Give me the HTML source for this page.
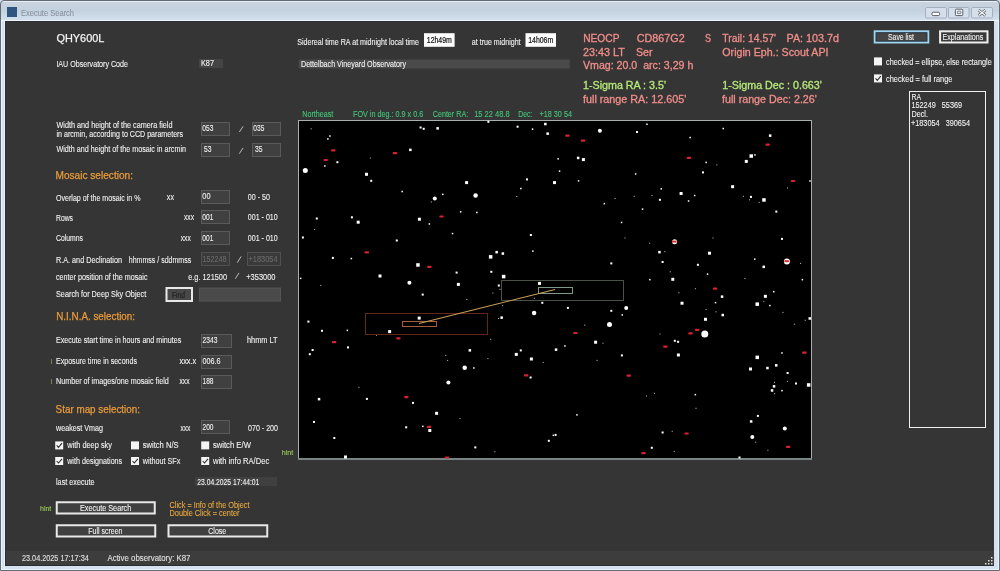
<!DOCTYPE html><html><head><meta charset="utf-8"><style>html,body{margin:0;padding:0;background:#333;overflow:hidden}svg{display:block;will-change:transform;filter:blur(0.3px)}text{font-family:"Liberation Sans",sans-serif}</style></head><body><svg width="1000" height="571" viewBox="0 0 1000 571"><rect x="0" y="0" width="1000" height="571" fill="#d4e2f0"/>
<defs><linearGradient id="tb" x1="0" y1="0" x2="0" y2="1"><stop offset="0" stop-color="#cbd3de"/><stop offset="0.45" stop-color="#c3d1df"/><stop offset="1" stop-color="#d4e0ee"/></linearGradient></defs>
<path d="M1 21 L1 4 Q1 1 4 1 L996 1 Q999 1 999 4 L999 21 Z" fill="url(#tb)"/>
<rect x="1" y="1" width="998" height="1" fill="#e8eef6"/>
<rect x="1" y="20" width="998" height="1" fill="#f0f6fc"/>
<rect x="1" y="21" width="1" height="549" fill="#e8f4ff"/>
<rect x="4" y="21" width="1" height="549" fill="#e4f0fc"/>
<rect x="998" y="21" width="1" height="549" fill="#e8f4ff"/>
<rect x="1" y="569" width="998" height="1" fill="#e8f4ff"/>
<path d="M0.5 570.5 L0.5 4 Q0.5 0.5 4 0.5 L996 0.5 Q999.5 0.5 999.5 4 L999.5 570.5 Z" fill="none" stroke="#646a74" stroke-width="1"/>
<rect x="5" y="21" width="989" height="545" fill="#2a2e32"/>
<rect x="6" y="22" width="988" height="543" fill="#353535"/>
<rect x="6" y="551" width="988" height="14" fill="#3d3d3d"/>
<rect x="991" y="557" width="1.5" height="1.5" fill="#e0e0e0"/>
<rect x="991" y="560" width="1.5" height="1.5" fill="#e0e0e0"/>
<rect x="988" y="560" width="1.5" height="1.5" fill="#e0e0e0"/>
<rect x="991" y="563" width="1.5" height="1.5" fill="#e0e0e0"/>
<rect x="988" y="563" width="1.5" height="1.5" fill="#e0e0e0"/>
<rect x="985" y="563" width="1.5" height="1.5" fill="#e0e0e0"/>
<rect x="7" y="7" width="10" height="10" fill="#2f5580"/>
<text x="21" y="16.2" font-size="8.4" fill="#8a949e" stroke="#8a949e" stroke-width="0.1" textLength="53" lengthAdjust="spacingAndGlyphs" xml:space="preserve">Execute Search</text>
<rect x="925.5" y="7.5" width="21.0" height="10.5" rx="1.2" fill="#d4dfeb" stroke="#a4b0c0" stroke-width="1"/>
<rect x="948.5" y="7.5" width="20.5" height="10.5" rx="1.2" fill="#d4dfeb" stroke="#a4b0c0" stroke-width="1"/>
<rect x="971.5" y="7.5" width="21.0" height="10.5" rx="1.2" fill="#d4dfeb" stroke="#a4b0c0" stroke-width="1"/>
<rect x="932" y="12.2" width="7.6" height="3.4" rx="1.2" fill="#fff" stroke="#454c55" stroke-width="0.9"/>
<rect x="955.4" y="9.2" width="7.4" height="6.4" rx="1" fill="#fff" stroke="#454c55" stroke-width="0.9"/>
<rect x="957.3" y="11.1" width="3.6" height="2.6" rx="0.6" fill="#dde4ec" stroke="#454c55" stroke-width="0.7"/>
<path d="M978.6 9.9 L985.4 15.4 M985.4 9.9 L978.6 15.4" stroke="#454c55" stroke-width="2.6"/><path d="M978.6 9.9 L985.4 15.4 M985.4 9.9 L978.6 15.4" stroke="#fff" stroke-width="1.3"/>
<text x="56.4" y="42" font-size="11.2" fill="#f2f2f2" stroke="#f2f2f2" stroke-width="0.25" textLength="48" lengthAdjust="spacingAndGlyphs" xml:space="preserve">QHY600L</text>
<text x="56.4" y="66.6" font-size="8.4" fill="#f2f2f2" stroke="#f2f2f2" stroke-width="0.1" textLength="71.6" lengthAdjust="spacingAndGlyphs" xml:space="preserve">IAU Observatory Code</text>
<rect x="199.5" y="59.5" width="23" height="8" fill="#444444" stroke="#444444" stroke-width="1"/>
<text x="201" y="66.4" font-size="8.4" fill="#f2f2f2" stroke="#f2f2f2" stroke-width="0.1" textLength="13" lengthAdjust="spacingAndGlyphs" xml:space="preserve">K87</text>
<text x="56.5" y="127.8" font-size="8.4" fill="#f2f2f2" stroke="#f2f2f2" stroke-width="0.1" textLength="116" lengthAdjust="spacingAndGlyphs" xml:space="preserve">Width and height of the camera field</text>
<text x="56.5" y="136.9" font-size="8.4" fill="#f2f2f2" stroke="#f2f2f2" stroke-width="0.1" textLength="126.5" lengthAdjust="spacingAndGlyphs" xml:space="preserve">in arcmin, according to CCD parameters</text>
<text x="56.5" y="152.3" font-size="8.4" fill="#f2f2f2" stroke="#f2f2f2" stroke-width="0.1" textLength="129.5" lengthAdjust="spacingAndGlyphs" xml:space="preserve">Width and height of the mosaic in arcmin</text>
<rect x="201.5" y="122.5" width="28" height="13" fill="#404040" stroke="#5a5a5a" stroke-width="1"/>
<text x="202.3" y="131" font-size="8.4" fill="#f2f2f2" stroke="#f2f2f2" stroke-width="0.1" textLength="11" lengthAdjust="spacingAndGlyphs" xml:space="preserve">053</text>
<line x1="239.3" y1="132.1" x2="243.1" y2="126.3" stroke="#c8c8c8" stroke-width="0.9"/>
<rect x="252.5" y="122.5" width="28" height="13" fill="#404040" stroke="#5a5a5a" stroke-width="1"/>
<text x="253.3" y="131" font-size="8.4" fill="#f2f2f2" stroke="#f2f2f2" stroke-width="0.1" textLength="11" lengthAdjust="spacingAndGlyphs" xml:space="preserve">035</text>
<rect x="201.5" y="143.5" width="28" height="13" fill="#404040" stroke="#5a5a5a" stroke-width="1"/>
<text x="204" y="152" font-size="8.4" fill="#f2f2f2" stroke="#f2f2f2" stroke-width="0.1" textLength="7.5" lengthAdjust="spacingAndGlyphs" xml:space="preserve">53</text>
<line x1="239.3" y1="153.7" x2="243.1" y2="147.9" stroke="#c8c8c8" stroke-width="0.9"/>
<rect x="252.5" y="143.5" width="28" height="13" fill="#404040" stroke="#5a5a5a" stroke-width="1"/>
<text x="255" y="152" font-size="8.4" fill="#f2f2f2" stroke="#f2f2f2" stroke-width="0.1" textLength="7.5" lengthAdjust="spacingAndGlyphs" xml:space="preserve">35</text>
<text x="55.5" y="178.9" font-size="11.5" fill="#eb9c3a" stroke="#eb9c3a" stroke-width="0.25" textLength="77.5" lengthAdjust="spacingAndGlyphs" xml:space="preserve">Mosaic selection:</text>
<text x="56" y="200.5" font-size="8.4" fill="#f2f2f2" stroke="#f2f2f2" stroke-width="0.1" textLength="84.5" lengthAdjust="spacingAndGlyphs" xml:space="preserve">Overlap of the mosaic in %</text>
<text x="166.8" y="200" font-size="8.4" fill="#f2f2f2" stroke="#f2f2f2" stroke-width="0.1" textLength="7.2" lengthAdjust="spacingAndGlyphs" xml:space="preserve">xx</text>
<rect x="201.5" y="190.5" width="28" height="13" fill="#404040" stroke="#5a5a5a" stroke-width="1"/>
<text x="202.3" y="199.3" font-size="8.4" fill="#f2f2f2" stroke="#f2f2f2" stroke-width="0.1" textLength="8.2" lengthAdjust="spacingAndGlyphs" xml:space="preserve">00</text>
<text x="247.8" y="200" font-size="8.4" fill="#f2f2f2" stroke="#f2f2f2" stroke-width="0.1" textLength="22.1" lengthAdjust="spacingAndGlyphs" xml:space="preserve">00 - 50</text>
<text x="56" y="220.5" font-size="8.4" fill="#f2f2f2" stroke="#f2f2f2" stroke-width="0.1" textLength="17" lengthAdjust="spacingAndGlyphs" xml:space="preserve">Rows</text>
<text x="184" y="220" font-size="8.4" fill="#f2f2f2" stroke="#f2f2f2" stroke-width="0.1" textLength="10" lengthAdjust="spacingAndGlyphs" xml:space="preserve">xxx</text>
<rect x="201.5" y="210.5" width="28" height="13" fill="#404040" stroke="#5a5a5a" stroke-width="1"/>
<text x="202.3" y="219.8" font-size="8.4" fill="#f2f2f2" stroke="#f2f2f2" stroke-width="0.1" textLength="11" lengthAdjust="spacingAndGlyphs" xml:space="preserve">001</text>
<text x="247.8" y="220.1" font-size="8.4" fill="#f2f2f2" stroke="#f2f2f2" stroke-width="0.1" textLength="29.9" lengthAdjust="spacingAndGlyphs" xml:space="preserve">001 - 010</text>
<text x="56" y="241.25" font-size="8.4" fill="#f2f2f2" stroke="#f2f2f2" stroke-width="0.1" textLength="27" lengthAdjust="spacingAndGlyphs" xml:space="preserve">Columns</text>
<text x="180.75" y="241" font-size="8.4" fill="#f2f2f2" stroke="#f2f2f2" stroke-width="0.1" textLength="10" lengthAdjust="spacingAndGlyphs" xml:space="preserve">xxx</text>
<rect x="201.5" y="231.5" width="28" height="13" fill="#404040" stroke="#5a5a5a" stroke-width="1"/>
<text x="202.3" y="240.5" font-size="8.4" fill="#f2f2f2" stroke="#f2f2f2" stroke-width="0.1" textLength="11" lengthAdjust="spacingAndGlyphs" xml:space="preserve">001</text>
<text x="247.8" y="241.1" font-size="8.4" fill="#f2f2f2" stroke="#f2f2f2" stroke-width="0.1" textLength="29.9" lengthAdjust="spacingAndGlyphs" xml:space="preserve">001 - 010</text>
<text x="56" y="263.25" font-size="8.4" fill="#f2f2f2" stroke="#f2f2f2" stroke-width="0.1" textLength="66" lengthAdjust="spacingAndGlyphs" xml:space="preserve">R.A. and Declination</text>
<text x="128.75" y="263.25" font-size="8.4" fill="#f2f2f2" stroke="#f2f2f2" stroke-width="0.1" textLength="62.5" lengthAdjust="spacingAndGlyphs" xml:space="preserve">hhmmss / sddmmss</text>
<rect x="201.5" y="252.5" width="28" height="13" fill="#3a3a3a" stroke="#505050" stroke-width="1"/>
<text x="202.5" y="261.5" font-size="8.4" fill="#6a6a6a" stroke="#6a6a6a" stroke-width="0.1" textLength="24" lengthAdjust="spacingAndGlyphs" xml:space="preserve">152248</text>
<line x1="237.3" y1="262.7" x2="241.1" y2="256.4" stroke="#c8c8c8" stroke-width="0.9"/>
<rect x="247.5" y="252.5" width="33" height="13" fill="#3a3a3a" stroke="#505050" stroke-width="1"/>
<text x="248.5" y="261.5" font-size="8.4" fill="#6a6a6a" stroke="#6a6a6a" stroke-width="0.1" textLength="29" lengthAdjust="spacingAndGlyphs" xml:space="preserve">+183054</text>
<text x="56" y="279.5" font-size="8.4" fill="#f2f2f2" stroke="#f2f2f2" stroke-width="0.1" textLength="91.5" lengthAdjust="spacingAndGlyphs" xml:space="preserve">center position of the mosaic</text>
<text x="188.25" y="279.5" font-size="8.4" fill="#f2f2f2" stroke="#f2f2f2" stroke-width="0.1" textLength="38.75" lengthAdjust="spacingAndGlyphs" xml:space="preserve">e.g. 121500</text>
<line x1="235.2" y1="278.8" x2="239" y2="272.9" stroke="#c8c8c8" stroke-width="0.9"/>
<text x="246.25" y="279.5" font-size="8.4" fill="#f2f2f2" stroke="#f2f2f2" stroke-width="0.1" textLength="29.25" lengthAdjust="spacingAndGlyphs" xml:space="preserve">+353000</text>
<text x="56" y="297" font-size="8.4" fill="#f2f2f2" stroke="#f2f2f2" stroke-width="0.1" textLength="90.25" lengthAdjust="spacingAndGlyphs" xml:space="preserve">Search for Deep Sky Object</text>
<rect x="166.5" y="288" width="25.5" height="13" fill="#484848" stroke="#e8e8e8" stroke-width="2"/>
<text x="172" y="297.8" font-size="8.4" fill="#1e1e1e" stroke="#1e1e1e" stroke-width="0.1" textLength="13" lengthAdjust="spacingAndGlyphs" xml:space="preserve">Find</text>
<rect x="199.5" y="288.0" width="81" height="13.0" fill="#4a4a4a" stroke="#555555" stroke-width="1"/>
<text x="56.25" y="319.9" font-size="11.5" fill="#eb9c3a" stroke="#eb9c3a" stroke-width="0.25" textLength="78.75" lengthAdjust="spacingAndGlyphs" xml:space="preserve">N.I.N.A. selection:</text>
<text x="56" y="343" font-size="8.4" fill="#f2f2f2" stroke="#f2f2f2" stroke-width="0.1" textLength="125.25" lengthAdjust="spacingAndGlyphs" xml:space="preserve">Execute start time in hours and minutes</text>
<rect x="201.5" y="334.5" width="30" height="13" fill="#404040" stroke="#5a5a5a" stroke-width="1"/>
<text x="202.5" y="343" font-size="8.4" fill="#f2f2f2" stroke="#f2f2f2" stroke-width="0.1" textLength="15" lengthAdjust="spacingAndGlyphs" xml:space="preserve">2343</text>
<text x="247" y="343" font-size="8.4" fill="#f2f2f2" stroke="#f2f2f2" stroke-width="0.1" textLength="30.5" lengthAdjust="spacingAndGlyphs" xml:space="preserve">hhmm LT</text>
<text x="50.6" y="364" font-size="7.2" fill="#8c9c56" stroke="#8c9c56" stroke-width="0.1" textLength="1.8" lengthAdjust="spacingAndGlyphs" xml:space="preserve">i</text>
<text x="56" y="364.25" font-size="8.4" fill="#f2f2f2" stroke="#f2f2f2" stroke-width="0.1" textLength="81" lengthAdjust="spacingAndGlyphs" xml:space="preserve">Exposure time in seconds</text>
<text x="179.5" y="364" font-size="8.4" fill="#f2f2f2" stroke="#f2f2f2" stroke-width="0.1" textLength="16.75" lengthAdjust="spacingAndGlyphs" xml:space="preserve">xxx.x</text>
<rect x="201.5" y="355.5" width="30" height="13" fill="#404040" stroke="#5a5a5a" stroke-width="1"/>
<text x="202.5" y="364" font-size="8.4" fill="#f2f2f2" stroke="#f2f2f2" stroke-width="0.1" textLength="18" lengthAdjust="spacingAndGlyphs" xml:space="preserve">006.6</text>
<text x="50.6" y="384" font-size="7.2" fill="#8c9c56" stroke="#8c9c56" stroke-width="0.1" textLength="1.8" lengthAdjust="spacingAndGlyphs" xml:space="preserve">i</text>
<text x="56" y="384.25" font-size="8.4" fill="#f2f2f2" stroke="#f2f2f2" stroke-width="0.1" textLength="112.75" lengthAdjust="spacingAndGlyphs" xml:space="preserve">Number of images/one mosaic field</text>
<text x="179.5" y="384" font-size="8.4" fill="#f2f2f2" stroke="#f2f2f2" stroke-width="0.1" textLength="10" lengthAdjust="spacingAndGlyphs" xml:space="preserve">xxx</text>
<rect x="201.5" y="375.5" width="30" height="13" fill="#404040" stroke="#5a5a5a" stroke-width="1"/>
<text x="202.5" y="384" font-size="8.4" fill="#f2f2f2" stroke="#f2f2f2" stroke-width="0.1" textLength="11" lengthAdjust="spacingAndGlyphs" xml:space="preserve">188</text>
<text x="55.6" y="413.1" font-size="11.5" fill="#eb9c3a" stroke="#eb9c3a" stroke-width="0.25" textLength="84.4" lengthAdjust="spacingAndGlyphs" xml:space="preserve">Star map selection:</text>
<text x="56" y="430.9" font-size="8.4" fill="#f2f2f2" stroke="#f2f2f2" stroke-width="0.1" textLength="47" lengthAdjust="spacingAndGlyphs" xml:space="preserve">weakest Vmag</text>
<text x="180.4" y="431" font-size="8.4" fill="#f2f2f2" stroke="#f2f2f2" stroke-width="0.1" textLength="10" lengthAdjust="spacingAndGlyphs" xml:space="preserve">xxx</text>
<rect x="201.5" y="420.5" width="28" height="13" fill="#404040" stroke="#5a5a5a" stroke-width="1"/>
<text x="202.5" y="429.5" font-size="8.4" fill="#f2f2f2" stroke="#f2f2f2" stroke-width="0.1" textLength="11" lengthAdjust="spacingAndGlyphs" xml:space="preserve">200</text>
<text x="248" y="431" font-size="8.4" fill="#f2f2f2" stroke="#f2f2f2" stroke-width="0.1" textLength="30" lengthAdjust="spacingAndGlyphs" xml:space="preserve">070 - 200</text>
<rect x="55.2" y="441.4" width="8" height="8" fill="#f4f4f4"/>
<path d="M56.7 445.4 L58.5 447.4 L62.0 443.2" fill="none" stroke="#303030" stroke-width="1.1"/>
<text x="67.2" y="448.2" font-size="8.4" fill="#f2f2f2" stroke="#f2f2f2" stroke-width="0.1" textLength="44.8" lengthAdjust="spacingAndGlyphs" xml:space="preserve">with deep sky</text>
<rect x="131" y="441.4" width="8" height="8" fill="#f4f4f4"/>
<text x="142.7" y="448.2" font-size="8.4" fill="#f2f2f2" stroke="#f2f2f2" stroke-width="0.1" textLength="36" lengthAdjust="spacingAndGlyphs" xml:space="preserve">switch N/S</text>
<rect x="201.2" y="441.4" width="8" height="8" fill="#f4f4f4"/>
<text x="212.9" y="448.2" font-size="8.4" fill="#f2f2f2" stroke="#f2f2f2" stroke-width="0.1" textLength="38" lengthAdjust="spacingAndGlyphs" xml:space="preserve">switch E/W</text>
<text x="281.8" y="454.9" font-size="7.6" fill="#9ccf5a" stroke="#9ccf5a" stroke-width="0.1" textLength="11.4" lengthAdjust="spacingAndGlyphs" xml:space="preserve">hint</text>
<rect x="55.2" y="457" width="8" height="8" fill="#f4f4f4"/>
<path d="M56.7 461 L58.5 463 L62.0 458.8" fill="none" stroke="#303030" stroke-width="1.1"/>
<text x="67.2" y="464.3" font-size="8.4" fill="#f2f2f2" stroke="#f2f2f2" stroke-width="0.1" textLength="55" lengthAdjust="spacingAndGlyphs" xml:space="preserve">with designations</text>
<rect x="131" y="457" width="8" height="8" fill="#f4f4f4"/>
<path d="M132.5 461 L134.3 463 L137.8 458.8" fill="none" stroke="#303030" stroke-width="1.1"/>
<text x="142.7" y="464.3" font-size="8.4" fill="#f2f2f2" stroke="#f2f2f2" stroke-width="0.1" textLength="37.7" lengthAdjust="spacingAndGlyphs" xml:space="preserve">without SFx</text>
<rect x="201.2" y="457" width="8" height="8" fill="#f4f4f4"/>
<path d="M202.7 461 L204.5 463 L208.0 458.8" fill="none" stroke="#303030" stroke-width="1.1"/>
<text x="212.9" y="464.3" font-size="8.4" fill="#f2f2f2" stroke="#f2f2f2" stroke-width="0.1" textLength="56.4" lengthAdjust="spacingAndGlyphs" xml:space="preserve">with info RA/Dec</text>
<text x="56" y="484.7" font-size="8.4" fill="#f2f2f2" stroke="#f2f2f2" stroke-width="0.1" textLength="38.6" lengthAdjust="spacingAndGlyphs" xml:space="preserve">last execute</text>
<rect x="195.5" y="477.5" width="81" height="8" fill="#404040" stroke="#404040" stroke-width="1"/>
<text x="197.3" y="484.5" font-size="8.4" fill="#f2f2f2" stroke="#f2f2f2" stroke-width="0.1" textLength="62" lengthAdjust="spacingAndGlyphs" xml:space="preserve">23.04.2025 17:44:01</text>
<text x="40" y="510.5" font-size="7.6" fill="#9ccf5a" stroke="#9ccf5a" stroke-width="0.1" textLength="11.25" lengthAdjust="spacingAndGlyphs" xml:space="preserve">hint</text>
<rect x="56.75" y="502.25" width="98.0" height="11.25" fill="#404040" stroke="#e8e8e8" stroke-width="2"/>
<text x="80" y="510.7" font-size="8.4" fill="#f2f2f2" stroke="#f2f2f2" stroke-width="0.1" textLength="51.25" lengthAdjust="spacingAndGlyphs" xml:space="preserve">Execute Search</text>
<text x="169.5" y="507.6" font-size="8.4" fill="#eaaa40" stroke="#eaaa40" stroke-width="0.1" textLength="80" lengthAdjust="spacingAndGlyphs" xml:space="preserve">Click = Info of the Object</text>
<text x="169.5" y="516" font-size="8.4" fill="#eaaa40" stroke="#eaaa40" stroke-width="0.1" textLength="70" lengthAdjust="spacingAndGlyphs" xml:space="preserve">Double Click = center</text>
<rect x="56.75" y="525.25" width="98.5" height="11.25" fill="#404040" stroke="#e8e8e8" stroke-width="2"/>
<text x="88.25" y="533.7" font-size="8.4" fill="#f2f2f2" stroke="#f2f2f2" stroke-width="0.1" textLength="34.25" lengthAdjust="spacingAndGlyphs" xml:space="preserve">Full screen</text>
<rect x="168.5" y="525.25" width="98.75" height="11.25" fill="#404040" stroke="#e8e8e8" stroke-width="2"/>
<text x="208.25" y="533.7" font-size="8.4" fill="#f2f2f2" stroke="#f2f2f2" stroke-width="0.1" textLength="18" lengthAdjust="spacingAndGlyphs" xml:space="preserve">Close</text>
<text x="22" y="561.25" font-size="8.4" fill="#e0e0e0" stroke="#e0e0e0" stroke-width="0.1" textLength="66.75" lengthAdjust="spacingAndGlyphs" xml:space="preserve">23.04.2025 17:17:34</text>
<text x="107.5" y="561.25" font-size="8.4" fill="#e0e0e0" stroke="#e0e0e0" stroke-width="0.1" textLength="83" lengthAdjust="spacingAndGlyphs" xml:space="preserve">Active observatory: K87</text>
<text x="297.25" y="44.7" font-size="8.4" fill="#f2f2f2" stroke="#f2f2f2" stroke-width="0.1" textLength="121.75" lengthAdjust="spacingAndGlyphs" xml:space="preserve">Sidereal time RA at midnight local time</text>
<rect x="424" y="33.2" width="30.6" height="13.6" fill="#ffffff"/>
<text x="426.8" y="43.3" font-size="8.4" fill="#111" stroke="#111" stroke-width="0.2" textLength="25" lengthAdjust="spacingAndGlyphs" xml:space="preserve">12h49m</text>
<text x="471.8" y="44.7" font-size="8.4" fill="#f2f2f2" stroke="#f2f2f2" stroke-width="0.1" textLength="48.8" lengthAdjust="spacingAndGlyphs" xml:space="preserve">at true midnight</text>
<rect x="525.5" y="33.2" width="30.5" height="13.6" fill="#ffffff"/>
<text x="528.2" y="43.3" font-size="8.4" fill="#111" stroke="#111" stroke-width="0.2" textLength="25" lengthAdjust="spacingAndGlyphs" xml:space="preserve">14h06m</text>
<rect x="298.7" y="59.5" width="271.2" height="9" fill="#4a4a4a"/>
<text x="301" y="66.5" font-size="8.4" fill="#f2f2f2" stroke="#f2f2f2" stroke-width="0.1" textLength="105" lengthAdjust="spacingAndGlyphs" xml:space="preserve">Dettelbach Vineyard Observatory</text>
<text x="583.2" y="41.8" font-size="10.4" fill="#f08e8a" stroke="#f08e8a" stroke-width="0.3" textLength="36.3" lengthAdjust="spacingAndGlyphs" xml:space="preserve">NEOCP</text>
<text x="636.75" y="41.8" font-size="10.4" fill="#f08e8a" stroke="#f08e8a" stroke-width="0.3" textLength="48" lengthAdjust="spacingAndGlyphs" xml:space="preserve">CD867G2</text>
<text x="705" y="41.8" font-size="10.4" fill="#f08e8a" stroke="#f08e8a" stroke-width="0.3" textLength="6" lengthAdjust="spacingAndGlyphs" xml:space="preserve">S</text>
<text x="722.3" y="41.8" font-size="10.4" fill="#f08e8a" stroke="#f08e8a" stroke-width="0.3" textLength="53.7" lengthAdjust="spacingAndGlyphs" xml:space="preserve">Trail: 14.57'</text>
<text x="786.5" y="41.8" font-size="10.4" fill="#f08e8a" stroke="#f08e8a" stroke-width="0.3" textLength="52.5" lengthAdjust="spacingAndGlyphs" xml:space="preserve">PA: 103.7d</text>
<text x="583" y="56.2" font-size="10.4" fill="#f08e8a" stroke="#f08e8a" stroke-width="0.3" textLength="41.75" lengthAdjust="spacingAndGlyphs" xml:space="preserve">23:43 LT</text>
<text x="636" y="56.2" font-size="10.4" fill="#f08e8a" stroke="#f08e8a" stroke-width="0.3" textLength="16.5" lengthAdjust="spacingAndGlyphs" xml:space="preserve">Ser</text>
<text x="722.3" y="56.2" font-size="10.4" fill="#f08e8a" stroke="#f08e8a" stroke-width="0.3" textLength="106.2" lengthAdjust="spacingAndGlyphs" xml:space="preserve">Origin Eph.: Scout API</text>
<text x="583" y="69.3" font-size="10.4" fill="#f08e8a" stroke="#f08e8a" stroke-width="0.3" textLength="110.3" lengthAdjust="spacingAndGlyphs" xml:space="preserve">Vmag: 20.0  arc: 3,29 h</text>
<text x="583" y="88.75" font-size="10.4" fill="#b4e878" stroke="#b4e878" stroke-width="0.3" textLength="83" lengthAdjust="spacingAndGlyphs" xml:space="preserve">1-Sigma RA : 3.5'</text>
<text x="722.3" y="88.75" font-size="10.4" fill="#b4e878" stroke="#b4e878" stroke-width="0.3" textLength="99.5" lengthAdjust="spacingAndGlyphs" xml:space="preserve">1-Sigma Dec : 0.663'</text>
<text x="583" y="102.8" font-size="10.4" fill="#f08e8a" stroke="#f08e8a" stroke-width="0.3" textLength="103.25" lengthAdjust="spacingAndGlyphs" xml:space="preserve">full range RA: 12.605'</text>
<text x="722" y="102.8" font-size="10.4" fill="#f08e8a" stroke="#f08e8a" stroke-width="0.3" textLength="94.8" lengthAdjust="spacingAndGlyphs" xml:space="preserve">full range Dec: 2.26'</text>
<rect x="874.7" y="31.3" width="53.6" height="11.2" fill="#454545" stroke="#9ed4f0" stroke-width="2"/>
<rect x="876.2" y="32.8" width="50.6" height="8.2" fill="none" stroke="#2a3a48" stroke-width="1"/>
<text x="888" y="40" font-size="8.4" fill="#f2f2f2" stroke="#f2f2f2" stroke-width="0.1" textLength="26" lengthAdjust="spacingAndGlyphs" xml:space="preserve">Save list</text>
<rect x="940.1" y="31.3" width="47.4" height="11.2" fill="#3a3a3a" stroke="#eeeeee" stroke-width="2"/>
<text x="942.6" y="40" font-size="8.4" fill="#f2f2f2" stroke="#f2f2f2" stroke-width="0.1" textLength="40.6" lengthAdjust="spacingAndGlyphs" xml:space="preserve">Explanations</text>
<rect x="874" y="57.4" width="8" height="8" fill="#f4f4f4"/>
<text x="886" y="64.9" font-size="8.4" fill="#f2f2f2" stroke="#f2f2f2" stroke-width="0.1" textLength="105.7" lengthAdjust="spacingAndGlyphs" xml:space="preserve">checked = ellipse, else rectangle</text>
<rect x="874" y="74.4" width="8" height="8" fill="#f4f4f4"/>
<path d="M875.5 78.4 L877.3 80.4 L880.8 76.2" fill="none" stroke="#303030" stroke-width="1.1"/>
<text x="886" y="82" font-size="8.4" fill="#f2f2f2" stroke="#f2f2f2" stroke-width="0.1" textLength="66.4" lengthAdjust="spacingAndGlyphs" xml:space="preserve">checked = full range</text>
<rect x="909.5" y="91.5" width="76" height="336" fill="#353535" stroke="#f0f0f0" stroke-width="1"/>
<text x="911.5" y="99.5" font-size="8.4" fill="#f2f2f2" stroke="#f2f2f2" stroke-width="0.1" textLength="9.5" lengthAdjust="spacingAndGlyphs" xml:space="preserve">RA</text>
<text x="911.5" y="108.2" font-size="8.4" fill="#f2f2f2" stroke="#f2f2f2" stroke-width="0.1" textLength="50.5" lengthAdjust="spacingAndGlyphs" xml:space="preserve">152249   55369</text>
<text x="911.5" y="116.8" font-size="8.4" fill="#f2f2f2" stroke="#f2f2f2" stroke-width="0.1" textLength="16.5" lengthAdjust="spacingAndGlyphs" xml:space="preserve">Decl.</text>
<text x="911" y="125.8" font-size="8.4" fill="#f2f2f2" stroke="#f2f2f2" stroke-width="0.1" textLength="59" lengthAdjust="spacingAndGlyphs" xml:space="preserve">+183054   390654</text>
<text x="302.25" y="116.6" font-size="8.4" fill="#44c87a" stroke="#44c87a" stroke-width="0.1" textLength="31" lengthAdjust="spacingAndGlyphs" xml:space="preserve">Northeast</text>
<text x="353" y="116.6" font-size="8.4" fill="#44c87a" stroke="#44c87a" stroke-width="0.1" textLength="70.2" lengthAdjust="spacingAndGlyphs" xml:space="preserve">FOV in deg.: 0.9 x 0.6</text>
<text x="432.75" y="116.6" font-size="8.4" fill="#44c87a" stroke="#44c87a" stroke-width="0.1" textLength="35.4" lengthAdjust="spacingAndGlyphs" xml:space="preserve">Center RA:</text>
<text x="474.2" y="116.6" font-size="8.4" fill="#44c87a" stroke="#44c87a" stroke-width="0.1" textLength="35.4" lengthAdjust="spacingAndGlyphs" xml:space="preserve">15 22 48.8</text>
<text x="518.3" y="116.6" font-size="8.4" fill="#44c87a" stroke="#44c87a" stroke-width="0.1" textLength="13.9" lengthAdjust="spacingAndGlyphs" xml:space="preserve">Dec:</text>
<text x="539.5" y="116.6" font-size="8.4" fill="#44c87a" stroke="#44c87a" stroke-width="0.1" textLength="32.5" lengthAdjust="spacingAndGlyphs" xml:space="preserve">+18 30 54</text>
<rect x="298" y="120" width="514" height="340" fill="#a8b0b0"/>
<rect x="299" y="121" width="512" height="337" fill="#000"/>
<rect x="298" y="458" width="514" height="2" fill="#7a8484"/>
<rect x="310.7" y="128.3" width="1" height="1" fill="#c8c8c8"/><rect x="329.2" y="135.3" width="1.5" height="1.5" fill="#fff"/><rect x="327.1" y="138.2" width="1.5" height="1.5" fill="#fff"/><rect x="331.1" y="149.3" width="4.4" height="2.2" rx="0.8" fill="#d82030"/><rect x="323.5" y="158.9" width="4.4" height="2.2" rx="0.8" fill="#d82030"/><rect x="336.4" y="161.2" width="2" height="2" fill="#fff"/><rect x="324.1" y="165.2" width="1.5" height="1.5" fill="#fff"/><circle cx="305.3" cy="170.6" r="2.5" fill="#fff"/><rect x="369.9" y="157.5" width="1" height="1" fill="#c8c8c8"/><rect x="392.7" y="152.1" width="4.4" height="2.2" rx="0.8" fill="#d82030"/><rect x="409.1" y="148.6" width="2.5" height="2.5" fill="#fff"/><rect x="419.6" y="126.5" width="2" height="2" fill="#fff"/><rect x="422.7" y="127.8" width="2" height="2" fill="#fff"/><rect x="365.0" y="172.8" width="3" height="3" fill="#fff"/><rect x="370.2" y="179.8" width="2" height="2" fill="#fff"/><rect x="401.4" y="190.8" width="1.5" height="1.5" fill="#fff"/><rect x="315.8" y="217.5" width="2" height="2" fill="#fff"/><rect x="350.9" y="216.3" width="2" height="2" fill="#fff"/><rect x="356.7" y="220.7" width="3" height="3" fill="#fff"/><rect x="417.9" y="217.7" width="3" height="3" fill="#fff"/><rect x="314.2" y="228.9" width="1" height="1" fill="#c8c8c8"/><rect x="436.4" y="127.1" width="2.5" height="2.5" fill="#fff"/><rect x="487.4" y="120.8" width="2" height="2" fill="#fff"/><rect x="516.6" y="125.7" width="2" height="2" fill="#fff"/><rect x="531.8" y="128.4" width="1.5" height="1.5" fill="#fff"/><rect x="544.1" y="122.8" width="2.5" height="2.5" fill="#fff"/><rect x="546.4" y="132.4" width="2.5" height="2.5" fill="#fff"/><rect x="465.1" y="181.1" width="3" height="3" fill="#fff"/><circle cx="434.8" cy="198.5" r="2.0" fill="#fff"/><rect x="442.1" y="193.6" width="1.5" height="1.5" fill="#fff"/><rect x="430.8" y="201.5" width="1" height="1" fill="#c8c8c8"/><circle cx="475.6" cy="195.5" r="2.25" fill="#fff"/><rect x="439.3" y="215.4" width="4.4" height="2.2" rx="0.8" fill="#d82030"/><rect x="459.9" y="211.1" width="1.5" height="1.5" fill="#fff"/><rect x="476.1" y="211.7" width="1.5" height="1.5" fill="#fff"/><rect x="428.6" y="223.2" width="1.5" height="1.5" fill="#fff"/><rect x="526.0" y="178.4" width="2" height="2" fill="#fff"/><rect x="520.1" y="187.8" width="1.5" height="1.5" fill="#fff"/><rect x="516.3" y="196.0" width="1" height="1" fill="#c8c8c8"/><rect x="553.0" y="181.1" width="3" height="3" fill="#fff"/><rect x="565.2" y="134.6" width="4.4" height="2.2" rx="0.8" fill="#d82030"/><rect x="580.8" y="139.5" width="4.4" height="2.2" rx="0.8" fill="#d82030"/><circle cx="599.9" cy="130.8" r="2.0" fill="#fff"/><rect x="636.0" y="131.0" width="2" height="2" fill="#fff"/><rect x="646.2" y="123.5" width="1.5" height="1.5" fill="#fff"/><rect x="557.4" y="158.1" width="1.5" height="1.5" fill="#fff"/><rect x="576.9" y="156.7" width="2.5" height="2.5" fill="#fff"/><rect x="581.9" y="158.1" width="3" height="3" fill="#fff"/><rect x="558.8" y="170.4" width="1.5" height="1.5" fill="#fff"/><rect x="577.8" y="180.1" width="1.5" height="1.5" fill="#fff"/><rect x="634.9" y="173.2" width="1.5" height="1.5" fill="#fff"/><rect x="660.5" y="188.1" width="1.5" height="1.5" fill="#fff"/><rect x="679.6" y="192.0" width="3" height="3" fill="#fff"/><rect x="614.5" y="198.0" width="1" height="1" fill="#c8c8c8"/><rect x="633.7" y="195.8" width="1" height="1" fill="#c8c8c8"/><rect x="651.4" y="195.0" width="1" height="1" fill="#c8c8c8"/><rect x="658.9" y="198.8" width="2" height="2" fill="#fff"/><rect x="603.6" y="202.9" width="1.5" height="1.5" fill="#fff"/><rect x="641.8" y="208.4" width="1.5" height="1.5" fill="#fff"/><rect x="620.8" y="221.7" width="1.5" height="1.5" fill="#fff"/><rect x="722.5" y="127.8" width="1.5" height="1.5" fill="#fff"/><rect x="689.4" y="136.8" width="1.5" height="1.5" fill="#fff"/><rect x="768.9" y="134.4" width="2.5" height="2.5" fill="#fff"/><rect x="765.5" y="143.6" width="4.4" height="2.2" rx="0.8" fill="#d82030"/><rect x="686.7" y="156.8" width="4.4" height="2.2" rx="0.8" fill="#d82030"/><rect x="749.5" y="154.3" width="3.5" height="3.5" fill="#fff"/><rect x="754.2" y="154.2" width="1.5" height="1.5" fill="#fff"/><rect x="744.8" y="159.9" width="3" height="3" fill="#fff"/><rect x="705.4" y="161.7" width="1.5" height="1.5" fill="#fff"/><rect x="716.4" y="164.4" width="1" height="1" fill="#c8c8c8"/><rect x="702.0" y="171.4" width="2" height="2" fill="#fff"/><rect x="790.8" y="179.9" width="4.4" height="2.2" rx="0.8" fill="#d82030"/><rect x="809.2" y="180.2" width="1.5" height="1.5" fill="#fff"/><rect x="787.0" y="187.4" width="1" height="1" fill="#c8c8c8"/><rect x="731.1" y="185.2" width="3" height="3" fill="#fff"/><rect x="693.9" y="194.8" width="1.5" height="1.5" fill="#fff"/><rect x="687.8" y="200.2" width="1.5" height="1.5" fill="#fff"/><rect x="742.9" y="195.8" width="1" height="1" fill="#c8c8c8"/><rect x="750.0" y="195.9" width="2" height="2" fill="#fff"/><rect x="749.0" y="199.3" width="1" height="1" fill="#c8c8c8"/><rect x="758.6" y="201.9" width="1" height="1" fill="#c8c8c8"/><rect x="762.2" y="198.2" width="3.5" height="3.5" fill="#fff"/><rect x="775.3" y="210.6" width="2" height="2" fill="#fff"/><rect x="301.9" y="236.5" width="2" height="2" fill="#fff"/><rect x="395.8" y="239.5" width="2" height="2" fill="#fff"/><rect x="364.6" y="251.3" width="4.4" height="2.2" rx="0.8" fill="#d82030"/><rect x="331.9" y="256.9" width="2" height="2" fill="#fff"/><rect x="350.6" y="257.8" width="1.5" height="1.5" fill="#fff"/><rect x="299.9" y="277.6" width="1.5" height="1.5" fill="#fff"/><rect x="378.5" y="274.5" width="3" height="3" fill="#fff"/><rect x="416.2" y="263.2" width="3.5" height="3.5" fill="#fff"/><circle cx="409.4" cy="282.8" r="2.0" fill="#fff"/><rect x="320.3" y="284.9" width="1" height="1" fill="#c8c8c8"/><rect x="421.7" y="293.6" width="2" height="2" fill="#fff"/><rect x="307.4" y="320.6" width="2" height="2" fill="#fff"/><rect x="321.0" y="329.8" width="2" height="2" fill="#fff"/><rect x="346.6" y="329.6" width="1.5" height="1.5" fill="#fff"/><rect x="331.9" y="341.1" width="4.4" height="2.2" rx="0.8" fill="#d82030"/><rect x="417.7" y="316.6" width="3" height="3" fill="#fff"/><rect x="388.1" y="330.1" width="3" height="3" fill="#fff"/><rect x="376.0" y="334.7" width="1" height="1" fill="#c8c8c8"/><rect x="396.2" y="337.2" width="4.4" height="2.2" rx="0.8" fill="#d82030"/><rect x="451.8" y="232.8" width="1.5" height="1.5" fill="#fff"/><rect x="529.9" y="234.0" width="2" height="2" fill="#fff"/><rect x="532.1" y="250.4" width="1.5" height="1.5" fill="#fff"/><rect x="495.4" y="250.9" width="2.5" height="2.5" fill="#fff"/><rect x="501.6" y="252.3" width="2.5" height="2.5" fill="#fff"/><rect x="488.9" y="255.1" width="3.5" height="3.5" fill="#fff"/><rect x="427.2" y="265.8" width="4.4" height="2.2" rx="0.8" fill="#d82030"/><rect x="455.6" y="271.6" width="2" height="2" fill="#fff"/><rect x="490.3" y="270.8" width="2" height="2" fill="#fff"/><rect x="501.9" y="274.8" width="3.5" height="3.5" fill="#fff"/><rect x="456.9" y="282.9" width="3" height="3" fill="#fff"/><rect x="497.8" y="284.5" width="2" height="2" fill="#fff"/><rect x="499.5" y="288.8" width="1" height="1" fill="#c8c8c8"/><rect x="492.4" y="292.5" width="1" height="1" fill="#c8c8c8"/><rect x="538.0" y="281.9" width="3" height="3" fill="#fff"/><rect x="466.3" y="299.0" width="1" height="1" fill="#c8c8c8"/><rect x="533.8" y="297.8" width="1" height="1" fill="#c8c8c8"/><rect x="541.3" y="301.8" width="2" height="2" fill="#fff"/><rect x="502.2" y="305.2" width="1" height="1" fill="#c8c8c8"/><circle cx="534.1" cy="313.0" r="2.25" fill="#fff"/><rect x="500.4" y="316.4" width="2.5" height="2.5" fill="#fff"/><rect x="498.1" y="318.0" width="1" height="1" fill="#c8c8c8"/><rect x="490.2" y="338.8" width="1" height="1" fill="#c8c8c8"/><rect x="624.5" y="237.4" width="1" height="1" fill="#c8c8c8"/><rect x="649.2" y="242.7" width="1" height="1" fill="#c8c8c8"/><circle cx="674.6" cy="241.8" r="2.5" fill="#fff"/><rect x="672.1" y="240.6" width="4.5" height="2" fill="#e02828"/><rect x="658.2" y="250.9" width="2.5" height="2.5" fill="#fff"/><rect x="664.3" y="251.1" width="1" height="1" fill="#c8c8c8"/><rect x="661.6" y="261.0" width="2" height="2" fill="#fff"/><rect x="610.3" y="262.4" width="2" height="2" fill="#fff"/><rect x="669.8" y="271.3" width="1" height="1" fill="#c8c8c8"/><rect x="671.3" y="277.8" width="3" height="3" fill="#fff"/><rect x="649.1" y="278.9" width="1.5" height="1.5" fill="#fff"/><rect x="678.4" y="292.3" width="1" height="1" fill="#c8c8c8"/><rect x="680.5" y="301.7" width="3" height="3" fill="#fff"/><rect x="566.9" y="306.9" width="2" height="2" fill="#fff"/><circle cx="626.2" cy="307.9" r="2.0" fill="#fff"/><rect x="610.3" y="309.8" width="2" height="2" fill="#fff"/><rect x="621.5" y="314.2" width="1.5" height="1.5" fill="#fff"/><circle cx="609.5" cy="324.6" r="2.5" fill="#fff"/><rect x="584.3" y="324.7" width="1" height="1" fill="#c8c8c8"/><rect x="573.2" y="331.9" width="4.4" height="2.2" rx="0.8" fill="#d82030"/><rect x="594.1" y="340.7" width="3" height="3" fill="#fff"/><rect x="602.5" y="342.7" width="1" height="1" fill="#c8c8c8"/><rect x="659.4" y="333.5" width="1" height="1" fill="#c8c8c8"/><rect x="673.8" y="339.8" width="2" height="2" fill="#fff"/><rect x="677.1" y="340.8" width="2" height="2" fill="#fff"/><rect x="712.5" y="237.4" width="1" height="1" fill="#c8c8c8"/><rect x="781.0" y="237.9" width="2" height="2" fill="#fff"/><rect x="708.0" y="251.7" width="3" height="3" fill="#fff"/><rect x="696.9" y="263.8" width="2" height="2" fill="#fff"/><rect x="754.0" y="258.4" width="1.5" height="1.5" fill="#fff"/><circle cx="786.9" cy="261.4" r="3" fill="#fff"/><rect x="784.4" y="260.2" width="4.5" height="2" fill="#e02828"/><rect x="800.1" y="262.9" width="1" height="1" fill="#c8c8c8"/><rect x="762.5" y="265.6" width="2.5" height="2.5" fill="#fff"/><rect x="706.8" y="273.4" width="1.5" height="1.5" fill="#fff"/><rect x="744.5" y="278.0" width="1" height="1" fill="#c8c8c8"/><rect x="801.6" y="278.9" width="1.5" height="1.5" fill="#fff"/><rect x="712.8" y="287.6" width="4.4" height="2.2" rx="0.8" fill="#d82030"/><rect x="694.9" y="288.2" width="1" height="1" fill="#c8c8c8"/><rect x="773.0" y="290.9" width="1.5" height="1.5" fill="#fff"/><rect x="720.8" y="295.4" width="2.5" height="2.5" fill="#fff"/><rect x="763.9" y="294.8" width="3" height="3" fill="#fff"/><rect x="714.8" y="301.9" width="1.5" height="1.5" fill="#fff"/><rect x="755.5" y="302.4" width="3.5" height="3.5" fill="#fff"/><rect x="769.1" y="304.8" width="1.5" height="1.5" fill="#fff"/><rect x="763.3" y="301.1" width="1" height="1" fill="#c8c8c8"/><rect x="705.6" y="309.0" width="1" height="1" fill="#c8c8c8"/><rect x="715.5" y="311.3" width="1" height="1" fill="#c8c8c8"/><rect x="721.5" y="313.8" width="2.5" height="2.5" fill="#fff"/><rect x="704.0" y="317.8" width="3" height="3" fill="#fff"/><rect x="782.5" y="311.9" width="1" height="1" fill="#c8c8c8"/><rect x="808.5" y="317.2" width="2.5" height="2.5" fill="#fff"/><rect x="804.7" y="319.8" width="1" height="1" fill="#c8c8c8"/><rect x="793.9" y="323.7" width="1" height="1" fill="#c8c8c8"/><rect x="694.9" y="328.8" width="4.4" height="2.2" rx="0.8" fill="#d82030"/><rect x="688.3" y="332.3" width="4.4" height="2.2" rx="0.8" fill="#d82030"/><circle cx="704.8" cy="334.0" r="3.5" fill="#fff"/><rect x="311.6" y="349.0" width="2" height="2" fill="#fff"/><rect x="308.8" y="353.2" width="2" height="2" fill="#fff"/><rect x="347.0" y="346.4" width="2" height="2" fill="#fff"/><rect x="358.4" y="386.8" width="1" height="1" fill="#c8c8c8"/><rect x="317.8" y="397.9" width="2.5" height="2.5" fill="#fff"/><rect x="365.9" y="397.9" width="2" height="2" fill="#fff"/><rect x="404.2" y="396.0" width="4.4" height="2.2" rx="0.8" fill="#d82030"/><rect x="412.0" y="401.9" width="2" height="2" fill="#fff"/><rect x="313.0" y="420.9" width="2" height="2" fill="#fff"/><rect x="405.2" y="426.3" width="2" height="2" fill="#fff"/><rect x="422.1" y="425.6" width="1.5" height="1.5" fill="#fff"/><rect x="333.3" y="437.0" width="2" height="2" fill="#fff"/><rect x="344.0" y="455.5" width="3" height="3" fill="#fff"/><rect x="468.6" y="349.1" width="2.5" height="2.5" fill="#fff"/><rect x="445.3" y="354.9" width="1" height="1" fill="#c8c8c8"/><rect x="447.1" y="359.9" width="1" height="1" fill="#c8c8c8"/><rect x="487.4" y="358.1" width="1" height="1" fill="#c8c8c8"/><rect x="514.8" y="352.9" width="3" height="3" fill="#fff"/><rect x="519.8" y="349.4" width="2" height="2" fill="#fff"/><rect x="529.9" y="357.5" width="3" height="3" fill="#fff"/><rect x="542.7" y="361.9" width="1" height="1" fill="#c8c8c8"/><circle cx="464.7" cy="367.8" r="2.25" fill="#fff"/><rect x="473.1" y="367.2" width="1.5" height="1.5" fill="#fff"/><circle cx="448.4" cy="382.5" r="2.0" fill="#fff"/><rect x="524.0" y="374.3" width="4.4" height="2.2" rx="0.8" fill="#d82030"/><rect x="529.6" y="376.5" width="2" height="2" fill="#fff"/><rect x="435.1" y="411.8" width="3" height="3" fill="#fff"/><rect x="459.5" y="418.0" width="1" height="1" fill="#c8c8c8"/><rect x="426.8" y="425.8" width="4.4" height="2.2" rx="0.8" fill="#d82030"/><rect x="428.3" y="429.0" width="3" height="3" fill="#fff"/><rect x="474.3" y="446.4" width="2" height="2" fill="#fff"/><rect x="494.4" y="451.3" width="1" height="1" fill="#c8c8c8"/><rect x="547.8" y="439.8" width="2" height="2" fill="#fff"/><rect x="552.6" y="434.6" width="1.5" height="1.5" fill="#fff"/><rect x="444.8" y="456.4" width="4.4" height="2.2" rx="0.8" fill="#d82030"/><rect x="554.8" y="348.4" width="2.5" height="2.5" fill="#fff"/><rect x="564.2" y="345.2" width="1.5" height="1.5" fill="#fff"/><rect x="663.2" y="345.5" width="4.4" height="2.2" rx="0.8" fill="#d82030"/><rect x="676.9" y="353.5" width="3" height="3" fill="#fff"/><rect x="620.9" y="354.4" width="2" height="2" fill="#fff"/><rect x="596.5" y="359.9" width="1" height="1" fill="#c8c8c8"/><rect x="626.5" y="374.5" width="4.4" height="2.2" rx="0.8" fill="#d82030"/><rect x="653.9" y="392.8" width="1" height="1" fill="#c8c8c8"/><rect x="646.0" y="395.4" width="1" height="1" fill="#c8c8c8"/><rect x="576.2" y="414.1" width="1.5" height="1.5" fill="#fff"/><rect x="554.6" y="433.9" width="2" height="2" fill="#fff"/><rect x="661.6" y="431.5" width="2" height="2" fill="#fff"/><rect x="671.7" y="430.8" width="1" height="1" fill="#c8c8c8"/><rect x="650.8" y="446.8" width="2" height="2" fill="#fff"/><rect x="673.7" y="450.9" width="1" height="1" fill="#c8c8c8"/><rect x="641.3" y="452.1" width="4.4" height="2.2" rx="0.8" fill="#d82030"/><rect x="755.5" y="355.6" width="3.5" height="3.5" fill="#fff"/><rect x="781.2" y="352.2" width="1.5" height="1.5" fill="#fff"/><rect x="802.2" y="351.5" width="4.4" height="2.2" rx="0.8" fill="#d82030"/><rect x="749.0" y="367.5" width="3" height="3" fill="#fff"/><rect x="766.2" y="366.8" width="2.5" height="2.5" fill="#fff"/><rect x="775.0" y="364.1" width="2.5" height="2.5" fill="#fff"/><rect x="786.6" y="372.0" width="2" height="2" fill="#fff"/><rect x="786.9" y="380.8" width="1" height="1" fill="#c8c8c8"/><rect x="795.0" y="382.5" width="2" height="2" fill="#fff"/><rect x="806.9" y="383.2" width="3.5" height="3.5" fill="#fff"/><rect x="774.0" y="381.8" width="1" height="1" fill="#c8c8c8"/><rect x="772.8" y="385.1" width="2.5" height="2.5" fill="#fff"/><rect x="770.8" y="389.2" width="2.5" height="2.5" fill="#fff"/><rect x="781.2" y="389.9" width="1.5" height="1.5" fill="#fff"/><rect x="774.2" y="393.2" width="1" height="1" fill="#c8c8c8"/><rect x="694.6" y="393.9" width="1.5" height="1.5" fill="#fff"/><rect x="695.5" y="407.8" width="1" height="1" fill="#c8c8c8"/><rect x="756.9" y="414.9" width="2" height="2" fill="#fff"/><rect x="749.9" y="420.2" width="2.5" height="2.5" fill="#fff"/><circle cx="784.8" cy="428.5" r="2.0" fill="#fff"/><rect x="684.4" y="432.4" width="4.4" height="2.2" rx="0.8" fill="#d82030"/><circle cx="752.3" cy="436.9" r="2.0" fill="#fff"/><rect x="755.2" y="441.7" width="1" height="1" fill="#c8c8c8"/><rect x="786.0" y="445.7" width="4.4" height="2.2" rx="0.8" fill="#d82030"/><rect x="767.4" y="449.7" width="1" height="1" fill="#c8c8c8"/><rect x="738.5" y="456.5" width="2" height="2" fill="#fff"/>
<rect x="365.5" y="313.5" width="122" height="21" fill="none" stroke="#62261a" stroke-width="1"/>
<rect x="402.5" y="321.5" width="34" height="5" fill="none" stroke="#a65c3a" stroke-width="1"/>
<rect x="501.5" y="280.5" width="122" height="20" fill="none" stroke="#4a5246" stroke-width="1"/>
<rect x="538.5" y="287.5" width="34" height="6" fill="none" stroke="#7c9a84" stroke-width="1"/>
<line x1="419" y1="323.5" x2="555" y2="289.5" stroke="#c8a05a" stroke-width="1.2"/></svg></body></html>
